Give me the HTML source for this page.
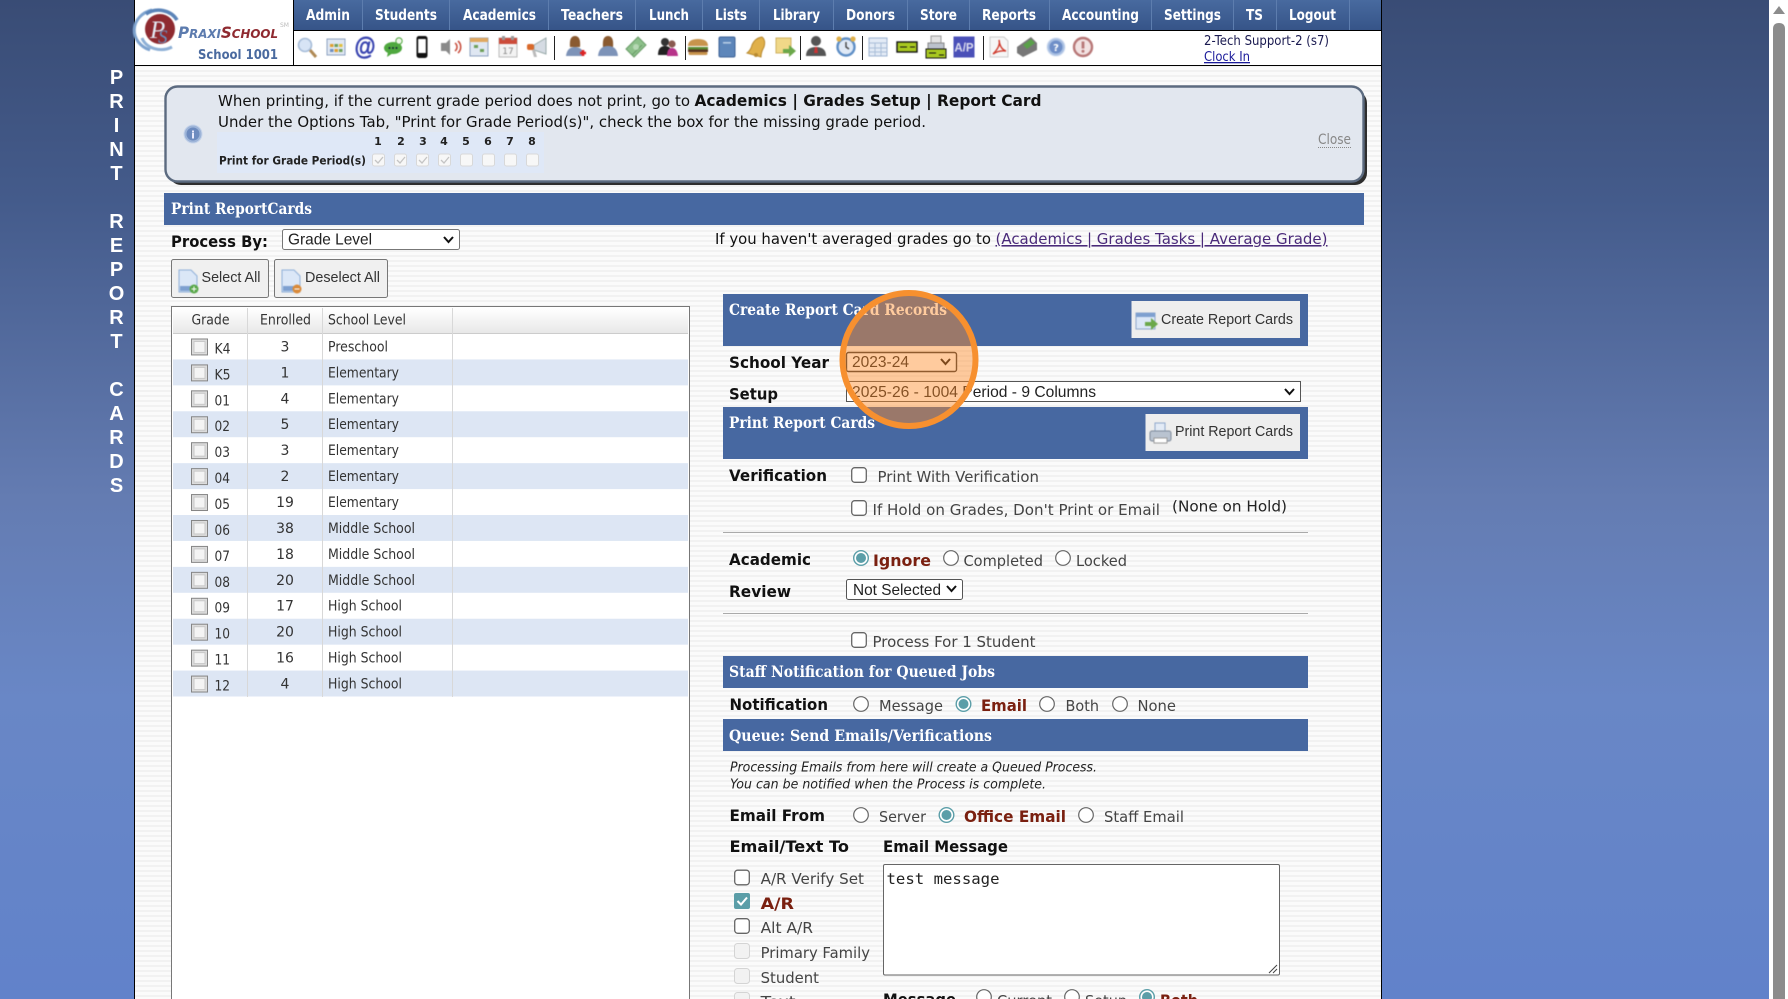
<!DOCTYPE html>
<html lang="en"><head><meta charset="utf-8"><title>Print ReportCards</title>
<style>
html,body{margin:0;padding:0;width:1788px;height:999px;overflow:hidden;background:#fff}
svg{display:block}
text{font-family:"DejaVu Sans","Liberation Sans",sans-serif;font-size:15.5px;fill:#444;white-space:pre}
.b{font-weight:bold;fill:#111;font-size:16px}
.r{font-weight:bold;fill:#7a2010;font-size:16px}
.h{font-weight:bold;fill:#fff;font-size:16px;font-family:"DejaVu Serif","DejaVu Sans",serif}
.n{font-weight:bold;fill:#fff;font-size:15px}
.a{font-family:"Liberation Sans",sans-serif;font-size:14.5px;fill:#333}
.s{font-family:"Liberation Sans",sans-serif;font-size:16px;fill:#222}
.t{font-size:14px;fill:#333}
.k{fill:#111;font-size:15.5px}
.kb{fill:#111;font-size:16px;font-weight:bold}
.i{font-style:italic;font-size:13.5px;fill:#222}
.v{font-family:"Liberation Sans",sans-serif;font-weight:bold;font-size:20px;fill:#fff}
.ic{filter:blur(.45px)}
</style></head><body>
<svg xmlns="http://www.w3.org/2000/svg" width="1788" height="999" viewBox="0 0 1788 999">
<defs>
<linearGradient id="bg" x1="0" y1="0" x2="0" y2="1"><stop offset="0" stop-color="#394c75"/><stop offset=".2" stop-color="#445b8b"/><stop offset=".5" stop-color="#647cb2"/><stop offset=".7" stop-color="#6987c6"/><stop offset="1" stop-color="#6182ca"/></linearGradient>
<linearGradient id="nav" x1="0" y1="0" x2="0" y2="1"><stop offset="0" stop-color="#486a9f"/><stop offset="1" stop-color="#365488"/></linearGradient>
<linearGradient id="th" x1="0" y1="0" x2="0" y2="1"><stop offset="0" stop-color="#fff"/><stop offset="1" stop-color="#e8e8e8"/></linearGradient>
<pattern id="st" width="4" height="5" patternUnits="userSpaceOnUse"><rect width="4" height="5" fill="#fbfbfb"/><rect width="4" height="2" fill="#f2f2f2"/></pattern>
<g id="cb"><rect x=".5" y=".5" width="16" height="16" fill="#dcdcdc" stroke="#858585"/><rect x="3" y="3" width="11" height="11" fill="#f4f4f4" stroke="#c8c8c8"/></g>
<g id="rc"><rect x=".7" y=".7" width="14.6" height="14.6" rx="3" fill="#fff" stroke="#666" stroke-width="1.3"/></g>
<g id="ro"><circle r="7.3" fill="#fff" stroke="#666" stroke-width="1.2"/></g>
<g id="rx"><circle r="7.3" fill="#fff" stroke="#5b9ea8" stroke-width="1.4"/><circle r="5" fill="#5b9ea8"/></g>
<g id="fc"><rect x=".5" y=".5" width="12" height="12" rx="2" fill="#f7f7f7" stroke="#d8d8d8"/></g>
</defs>

<rect width="1769" height="999" fill="url(#bg)"/>
<rect x="1769" width="19" height="999" fill="#fff"/>
<path d="M1779 6l6 8h-12z" fill="#8c8c8c"/>
<path d="M1773 999V29q0-6 6-6t6 6v970z" fill="#8c8c8c"/>

<!-- left vertical text -->
<g text-anchor="middle">
<text class="v" x="116.500" y="84">P</text><text class="v" x="116.500" y="108">R</text><text class="v" x="116.500" y="132">I</text><text class="v" x="116.500" y="156">N</text><text class="v" x="116.500" y="180">T</text>
<text class="v" x="116.500" y="228">R</text><text class="v" x="116.500" y="252">E</text><text class="v" x="116.500" y="276">P</text><text class="v" x="116.500" y="300">O</text><text class="v" x="116.500" y="324">R</text><text class="v" x="116.500" y="348">T</text>
<text class="v" x="116.500" y="396">C</text><text class="v" x="116.500" y="420">A</text><text class="v" x="116.500" y="444">R</text><text class="v" x="116.500" y="468">D</text><text class="v" x="116.500" y="492">S</text>
</g>

<!-- main column -->
<rect x="134" width="1248" height="999" fill="#000"/>
<rect x="135" y="66" width="1246" height="933" fill="url(#st)"/>
<rect x="135" width="158" height="65" fill="#fff"/>
<rect x="294" y="31" width="1087" height="34" fill="#fff"/>
<rect x="294" width="1087" height="30" fill="url(#nav)"/>
<rect x="293" width="1" height="65" fill="#000"/>

<!-- logo -->
<g class="ic">
<path d="M152 10A24 21 0 0 0 150 50" fill="none" stroke="#7ea3cf" stroke-width="3"/>
<path d="M146 14A21 19 0 0 1 177 20" fill="none" stroke="#5b84b8" stroke-width="3.500"/>
<path d="M142 38A20 16 0 0 0 172 47" fill="none" stroke="#8eb0d6" stroke-width="3"/>
<circle cx="160" cy="29" r="15" fill="#8f2a30"/>
<text x="150" y="38" style="font-family:'Liberation Serif',serif;font-style:italic;font-size:25px;fill:#e3e9f3">P</text>
<text x="158" y="43" style="font-family:'Liberation Serif',serif;font-style:italic;font-size:19px;fill:#6a90c0">S</text>
</g>
<text x="178" y="38" textLength="100" lengthAdjust="spacingAndGlyphs" style="font-weight:bold;font-style:italic;font-size:12.5px;fill:#5c7bae"><tspan style="font-size:16px">P</tspan>RAXI<tspan style="font-size:16px;fill:#8f2a30">S</tspan><tspan style="fill:#8f2a30">CHOOL</tspan></text>
<text x="280" y="27" style="font-size:6px;fill:#bbb">SM</text>
<text x="198" y="59" textLength="80" lengthAdjust="spacingAndGlyphs" style="font-family:'DejaVu Sans',sans-serif;font-weight:bold;font-size:13.5px;fill:#4a6a9f">School 1001</text>

<!-- nav -->
<g fill="#5d7dae">
<rect x="362" width="1" height="30"/><rect x="449" width="1" height="30"/><rect x="548" width="1" height="30"/><rect x="635" width="1" height="30"/><rect x="702" width="1" height="30"/><rect x="759" width="1" height="30"/><rect x="833" width="1" height="30"/><rect x="907" width="1" height="30"/><rect x="969" width="1" height="30"/><rect x="1049" width="1" height="30"/><rect x="1151" width="1" height="30"/><rect x="1233" width="1" height="30"/><rect x="1276" width="1" height="30"/><rect x="1349" width="1" height="30"/>
</g>
<text class="n" x="306" y="20" textLength="44" lengthAdjust="spacingAndGlyphs">Admin</text>
<text class="n" x="375" y="20" textLength="62" lengthAdjust="spacingAndGlyphs">Students</text>
<text class="n" x="463" y="20" textLength="73" lengthAdjust="spacingAndGlyphs">Academics</text>
<text class="n" x="561" y="20" textLength="62" lengthAdjust="spacingAndGlyphs">Teachers</text>
<text class="n" x="649" y="20" textLength="40" lengthAdjust="spacingAndGlyphs">Lunch</text>
<text class="n" x="715" y="20" textLength="32" lengthAdjust="spacingAndGlyphs">Lists</text>
<text class="n" x="773" y="20" textLength="47" lengthAdjust="spacingAndGlyphs">Library</text>
<text class="n" x="846" y="20" textLength="49" lengthAdjust="spacingAndGlyphs">Donors</text>
<text class="n" x="920" y="20" textLength="37" lengthAdjust="spacingAndGlyphs">Store</text>
<text class="n" x="982" y="20" textLength="54" lengthAdjust="spacingAndGlyphs">Reports</text>
<text class="n" x="1062" y="20" textLength="77" lengthAdjust="spacingAndGlyphs">Accounting</text>
<text class="n" x="1164" y="20" textLength="57" lengthAdjust="spacingAndGlyphs">Settings</text>
<text class="n" x="1246" y="20" textLength="17" lengthAdjust="spacingAndGlyphs">TS</text>
<text class="n" x="1289" y="20" textLength="47" lengthAdjust="spacingAndGlyphs">Logout</text>

<!-- toolbar icons -->
<g fill="#222"><rect x="554" y="36" width="1" height="24"/><rect x="685" y="36" width="1" height="24"/><rect x="800" y="36" width="1" height="24"/><rect x="862" y="36" width="1" height="24"/><rect x="983" y="36" width="1" height="24"/></g>
<g class="ic" transform="translate(0,-1)">
<g transform="translate(307,48)"><path d="M3 3l6 7" stroke="#b08a55" stroke-width="3"/><circle cx="-2" cy="-2" r="6.500" fill="#d7e4f5" stroke="#a6bcd8" stroke-width="1.600"/></g>
<g transform="translate(336,48)"><rect x="-9" y="-8" width="18" height="16" fill="#dfe7f2" stroke="#8ea3c2"/><rect x="-6" y="-3" width="3.500" height="3" fill="#e0a030"/><rect x="-1.500" y="-3" width="3.500" height="3" fill="#6fa05a"/><rect x="3" y="-3" width="3.500" height="3" fill="#e0c040"/><rect x="-6" y="2" width="3.500" height="3" fill="#6f8fbf"/><rect x="-1.500" y="2" width="3.500" height="3" fill="#e0a030"/><rect x="3" y="2" width="3.500" height="3" fill="#6fa05a"/></g>
<text x="365" y="56" text-anchor="middle" style="font-size:25px;font-weight:bold;fill:#3a45b0;stroke:#3a45b0;stroke-width:.5px;font-family:'Liberation Sans',sans-serif" textLength="21" lengthAdjust="spacingAndGlyphs">@</text>
<g transform="translate(393,49)"><ellipse rx="9" ry="6" fill="#4fa83f"/><path d="M-5 4l-1 5 6-4z" fill="#4fa83f"/><circle cx="-3.500" r="1" fill="#123"/><circle r="1" fill="#123"/><circle cx="3.500" r="1" fill="#123"/><circle cx="6" cy="-7" r="3.200" fill="#eef5e8" stroke="#4fa83f"/></g>
<g transform="translate(422,48)"><rect x="-5.500" y="-11" width="11" height="22" rx="2.500" fill="#111"/><rect x="-3.800" y="-8" width="7.600" height="14" fill="#fff"/></g>
<g transform="translate(452,48)"><path d="M-11-4h5l4-4v16l-4-4h-5z" fill="#8a8a8a"/><path d="M3-4a5 5 0 0 1 0 8M6-6a8 8 0 0 1 0 12" fill="none" stroke="#c85040" stroke-width="1.600"/></g>
<g transform="translate(479,48)"><rect x="-9" y="-9" width="18" height="18" fill="#dfe7f2" stroke="#8ea3c2"/><rect x="-9" y="-9" width="18" height="4" fill="#e0a860"/><rect x="-5" y="-2" width="4" height="3" fill="#6fa05a"/><rect x="1" y="2" width="4" height="3" fill="#6fa05a"/></g>
<g transform="translate(508,48)"><rect x="-9" y="-9" width="18" height="19" fill="#f3f3f3" stroke="#bbb"/><rect x="-9" y="-9" width="18" height="6" fill="#cc4b3a"/><rect x="-6" y="-11" width="3" height="4" fill="#999"/><rect x="3" y="-11" width="3" height="4" fill="#999"/><text x="0" y="7" text-anchor="middle" style="font-size:9px;fill:#888">17</text></g>
<g transform="translate(537,48)"><path d="M-3-2L9-9v16L-3 3z" fill="#d5dbe3" stroke="#9aa"/><rect x="-10" y="-3" width="7" height="6" rx="2" fill="#d96a2c"/><path d="M-5 3l2 7h3l-2-7z" fill="#bbb"/></g>
<g transform="translate(575,48)"><path d="M-5 0q-1-11 5-11t5 11z" fill="#8a5a30"/><path d="M-9 9q1-9 9-9t9 9z" fill="#7d93b8"/><path d="M5 6h6M8 3v6" stroke="#d22" stroke-width="2.600"/></g>
<g transform="translate(608,48)"><path d="M-5 0q-1-11 5-11t5 11z" fill="#8a5a30"/><path d="M-10 9q1-10 10-10t10 10z" fill="#7d93b8"/></g>
<g transform="translate(636,48)"><path d="M-10 2L2-10 10-2-2 10z" fill="#8dc08a" stroke="#6a9c68"/><path d="M-7 5L3-5" stroke="#6a9c68" transform="translate(3,3)"/><circle cy="0" r="3" fill="#b6d8b4"/></g>
<g transform="translate(668,48)"><circle cx="-3" cy="-5" r="4" fill="#333"/><path d="M-10 8q0-9 7-9t7 9z" fill="#222"/><circle cx="4" cy="-3" r="3.600" fill="#8a5a50"/><path d="M-1 9q0-8 5-8t6 8z" fill="#b8338a"/></g>
<g transform="translate(698,48)"><path d="M-10-1q0-7 10-7t10 7z" fill="#c8944c"/><rect x="-10" y="0" width="20" height="2.500" fill="#5a8a30"/><rect x="-10" y="2.500" width="20" height="2.500" fill="#5a3420"/><rect x="-9.500" y="5" width="19" height="3" rx="1.500" fill="#c8944c"/></g>
<g transform="translate(727,48)"><rect x="-8" y="-10" width="16" height="20" rx="1.500" fill="#5d86ba" stroke="#3d6296"/><rect x="-4" y="-5" width="8" height="1.600" fill="#b9cde6"/></g>
<g transform="translate(757,48)"><path d="M-10 6Q-6 3-5-2-2-9 5-10 9-7 7 0 4 5 4 10z" fill="#e0b04a" stroke="#b88a30"/><circle cx="-1" cy="8" r="2" fill="#b88a30"/></g>
<g transform="translate(785,48)"><rect x="-9" y="-9" width="15" height="15" fill="#f0d888" stroke="#cfb060"/><path d="M-2 2h6v-4l7 6-7 6V6h-6z" fill="#6ba84a"/></g>
<g transform="translate(816,48)"><circle cy="-6" r="5" fill="#555"/><path d="M-10 9q0-9 10-9t10 9z" fill="#555"/><path d="M-1 0h2l1 6H-2z" fill="#c33"/></g>
<g transform="translate(846,48)"><circle r="8.500" fill="#dfe9f6" stroke="#5f8fc6" stroke-width="2.400"/><path d="M0-5v5l3 2" stroke="#444" fill="none" stroke-width="1.400"/><circle cx="-7" cy="-8" r="2.600" fill="#e0b04a"/><circle cx="7" cy="-8" r="2.600" fill="#e0b04a"/></g>
<g transform="translate(878,48)"><rect x="-9" y="-9" width="18" height="18" fill="#e3ebf6" stroke="#9db3d2"/><path d="M-9-4h18M-9 1h18M-9 5h18M-3-4v13M3-4v13" stroke="#a9bdd8"/></g>
<g transform="translate(907,48)"><rect x="-10" y="-5" width="20" height="10" fill="#a8c820" stroke="#111" stroke-width="1.400"/><path d="M-7 0h7M3 0h5" stroke="#111"/></g>
<g transform="translate(936,48)"><rect x="-5" y="-11" width="10" height="8" fill="#e3e3e3" stroke="#999"/><rect x="-8" y="-4" width="16" height="6" fill="#bcc2cc" stroke="#888"/><rect x="-10" y="2" width="20" height="9" fill="#a8c820" stroke="#111"/><path d="M-7 6h7M3 8h5" stroke="#111"/></g>
<g transform="translate(964,48)"><rect x="-10.500" y="-10.500" width="21" height="21" fill="#4a50b8"/><text x="0" y="4.500" text-anchor="middle" style="font-family:'Liberation Sans',sans-serif;font-size:11.500px;font-weight:bold;fill:#dde">A/P</text></g>
<g transform="translate(999,48)"><path d="M-9-10H5l4 4v16H-9z" fill="#f6f6f6" stroke="#ccc"/><path d="M-6 7Q2-1 0-7 1 2 7 4 0 3-6 7z" fill="none" stroke="#d03a2c" stroke-width="1.400"/></g>
<g transform="translate(1027,48)"><path d="M-10 0L4-10 10-4V3L-4 10-10 6z" fill="#777"/><path d="M-4-2L4-8 8-4 0 2z" fill="#5aa04a"/></g>
<g transform="translate(1056,48)"><circle r="9" fill="#a8bfe2" stroke="#d5e0f2"/><circle r="6.500" fill="#6f8fc8"/><text x="0" y="4" text-anchor="middle" style="font-size:10px;font-weight:bold;fill:#fff">?</text></g>
<g transform="translate(1083,48)"><circle r="9" fill="#f2e2e2" stroke="#b87878" stroke-width="2.400"/><rect x="-1.400" y="-5.500" width="2.800" height="7" fill="#b87878"/><circle cy="4.200" r="1.500" fill="#b87878"/></g>
</g>

<text x="1204" y="45" textLength="125" lengthAdjust="spacingAndGlyphs" style="font-size:13px;fill:#1a1a50">2-Tech Support-2 (s7)</text>
<text x="1204" y="61" textLength="46" lengthAdjust="spacingAndGlyphs" style="font-size:13px;fill:#1a1a9a;text-decoration:underline">Clock In</text>

<!-- alert -->
<rect x="169" y="91" width="1198" height="94" rx="12" fill="#2e2e2e"/>
<rect x="165.500" y="86.500" width="1198" height="95" rx="12" fill="#e2e7ef" stroke="#5c6b80" stroke-width="2.400"/>
<text class="k" x="218" y="106" textLength="472" lengthAdjust="spacingAndGlyphs">When printing, if the current grade period does not print, go to</text>
<text class="kb" x="694.500" y="106" textLength="347" lengthAdjust="spacingAndGlyphs">Academics | Grades Setup | Report Card</text>
<text class="k" x="218" y="127" textLength="708" lengthAdjust="spacingAndGlyphs">Under the Options Tab, "Print for Grade Period(s)", check the box for the missing grade period.</text>
<circle cx="193" cy="134" r="9" fill="#9db4d8" stroke="#c6d4ea"/>
<circle cx="193" cy="134" r="6.500" fill="#6d8bbf"/>
<text x="193" y="138.500" text-anchor="middle" style="font-size:11px;font-weight:bold;fill:#eef">i</text>
<rect x="217" y="132" width="327" height="41" fill="#dfe8f7"/>
<g text-anchor="middle">
<text x="378" y="145" style="font-size:11px;font-weight:bold;fill:#222">1</text><text x="401" y="145" style="font-size:11px;font-weight:bold;fill:#222">2</text><text x="423" y="145" style="font-size:11px;font-weight:bold;fill:#222">3</text><text x="444" y="145" style="font-size:11px;font-weight:bold;fill:#222">4</text><text x="466" y="145" style="font-size:11px;font-weight:bold;fill:#222">5</text><text x="488" y="145" style="font-size:11px;font-weight:bold;fill:#222">6</text><text x="510" y="145" style="font-size:11px;font-weight:bold;fill:#222">7</text><text x="532" y="145" style="font-size:11px;font-weight:bold;fill:#222">8</text>
</g>
<text x="219" y="164.500" textLength="147" lengthAdjust="spacingAndGlyphs" style="font-size:11.500px;font-weight:bold;fill:#222">Print for Grade Period(s)</text>
<use href="#fc" x="372" y="153.500"/><use href="#fc" x="394" y="153.500"/><use href="#fc" x="416" y="153.500"/><use href="#fc" x="438" y="153.500"/><use href="#fc" x="460" y="153.500"/><use href="#fc" x="482" y="153.500"/><use href="#fc" x="504" y="153.500"/><use href="#fc" x="526" y="153.500"/>
<path d="M375 160l3 3 5-6M397 160l3 3 5-6M419 160l3 3 5-6M441 160l3 3 5-6" fill="none" stroke="#c4c4c4" stroke-width="1.300"/>
<text x="1318" y="144" textLength="33" lengthAdjust="spacingAndGlyphs" style="font-size:14px;fill:#888">Close</text>
<path d="M1318 147.500h33" stroke="#888" stroke-dasharray="1 1"/>

<!-- header -->
<rect x="164" y="193" width="1200" height="32" fill="#4768a1"/>
<text class="h" x="171" y="214" textLength="141" lengthAdjust="spacingAndGlyphs">Print ReportCards</text>
<text class="b" x="171" y="247" textLength="97" lengthAdjust="spacingAndGlyphs">Process By:</text>
<rect x="282.500" y="229.500" width="177" height="20" rx="2" fill="#fff" stroke="#777"/>
<text class="s" x="288" y="244.500" textLength="84" lengthAdjust="spacingAndGlyphs">Grade Level</text>
<path d="M444 237l4.500 5 4.500-5" fill="none" stroke="#111" stroke-width="2"/>
<text class="k" x="715" y="244" textLength="276" lengthAdjust="spacingAndGlyphs">If you haven't averaged grades go to</text>
<text x="995.500" y="244" textLength="332" lengthAdjust="spacingAndGlyphs" style="font-size:15.500px;fill:#4a2a7a;text-decoration:underline">(Academics | Grades Tasks | Average Grade)</text>

<!-- buttons -->
<rect x="171.500" y="259.500" width="97" height="38" rx="2" fill="#f0f0f0" stroke="#777"/>
<rect x="274.500" y="259.500" width="113" height="38" rx="2" fill="#f0f0f0" stroke="#777"/>
<g class="ic"><path d="M179 270h12l6 6v16h-18z" fill="#dbe7f7" stroke="#8fb0d8"/><rect x="180" y="286" width="14" height="5" fill="#7ea0d0"/><circle cx="194" cy="289" r="4.500" fill="#5aa84a"/><path d="M191.500 289h5M194 286.500v5" stroke="#fff"/>
<path d="M282 270h12l6 6v16h-18z" fill="#dbe7f7" stroke="#8fb0d8"/><rect x="283" y="286" width="14" height="5" fill="#7ea0d0"/><circle cx="297" cy="289" r="4.500" fill="#d98a3a"/><path d="M294.500 289h5" stroke="#fff"/></g>
<text class="a" x="201.500" y="282" textLength="59" lengthAdjust="spacingAndGlyphs">Select All</text>
<text class="a" x="305" y="282" textLength="75" lengthAdjust="spacingAndGlyphs">Deselect All</text>

<!-- grade table -->
<rect x="171.500" y="306.500" width="518" height="701" fill="#fff" stroke="#777"/>
<rect x="173" y="308" width="515" height="25" fill="url(#th)"/>
<rect x="173" y="333" width="515" height="1" fill="#ccc"/>
<text class="t" x="191.500" y="324.500" textLength="38" lengthAdjust="spacingAndGlyphs">Grade</text>
<text class="t" x="260" y="324.500" textLength="51" lengthAdjust="spacingAndGlyphs">Enrolled</text>
<text class="t" x="328" y="324.500" textLength="78" lengthAdjust="spacingAndGlyphs">School Level</text>
<g fill="#d8d8d8"><rect x="247" y="308" width="1" height="389"/><rect x="322" y="308" width="1" height="389"/><rect x="452" y="308" width="1" height="389"/></g>
<g transform="translate(0,.4) scale(1,.9973)">
<g fill="#dde6f4"><rect x="173" y="360" width="515" height="26"/><rect x="173" y="412" width="515" height="26"/><rect x="173" y="464" width="515" height="26"/><rect x="173" y="516" width="515" height="26"/><rect x="173" y="568" width="515" height="26"/><rect x="173" y="620" width="515" height="26"/><rect x="173" y="672" width="515" height="26"/></g>
<g fill="#d8d8d8"><rect x="247" y="334" width="1" height="364"/><rect x="322" y="334" width="1" height="364"/><rect x="452" y="334" width="1" height="364"/></g>
<use href="#cb" x="191" y="339"/><text class="t" x="214.500" y="354" textLength="16" lengthAdjust="spacingAndGlyphs">K4</text><text class="t" x="285" y="352" text-anchor="middle">3</text><text class="t" x="328" y="352" textLength="60" lengthAdjust="spacingAndGlyphs">Preschool</text>
<use href="#cb" x="191" y="365"/><text class="t" x="214.500" y="380" textLength="16" lengthAdjust="spacingAndGlyphs">K5</text><text class="t" x="285" y="378" text-anchor="middle">1</text><text class="t" x="328" y="378" textLength="71" lengthAdjust="spacingAndGlyphs">Elementary</text>
<use href="#cb" x="191" y="391"/><text class="t" x="214.500" y="406" textLength="15.500" lengthAdjust="spacingAndGlyphs">01</text><text class="t" x="285" y="404" text-anchor="middle">4</text><text class="t" x="328" y="404" textLength="71" lengthAdjust="spacingAndGlyphs">Elementary</text>
<use href="#cb" x="191" y="417"/><text class="t" x="214.500" y="432" textLength="15.500" lengthAdjust="spacingAndGlyphs">02</text><text class="t" x="285" y="430" text-anchor="middle">5</text><text class="t" x="328" y="430" textLength="71" lengthAdjust="spacingAndGlyphs">Elementary</text>
<use href="#cb" x="191" y="443"/><text class="t" x="214.500" y="458" textLength="15.500" lengthAdjust="spacingAndGlyphs">03</text><text class="t" x="285" y="456" text-anchor="middle">3</text><text class="t" x="328" y="456" textLength="71" lengthAdjust="spacingAndGlyphs">Elementary</text>
<use href="#cb" x="191" y="469"/><text class="t" x="214.500" y="484" textLength="15.500" lengthAdjust="spacingAndGlyphs">04</text><text class="t" x="285" y="482" text-anchor="middle">2</text><text class="t" x="328" y="482" textLength="71" lengthAdjust="spacingAndGlyphs">Elementary</text>
<use href="#cb" x="191" y="495"/><text class="t" x="214.500" y="510" textLength="15.500" lengthAdjust="spacingAndGlyphs">05</text><text class="t" x="285" y="508" text-anchor="middle">19</text><text class="t" x="328" y="508" textLength="71" lengthAdjust="spacingAndGlyphs">Elementary</text>
<use href="#cb" x="191" y="521"/><text class="t" x="214.500" y="536" textLength="15.500" lengthAdjust="spacingAndGlyphs">06</text><text class="t" x="285" y="534" text-anchor="middle">38</text><text class="t" x="328" y="534" textLength="87" lengthAdjust="spacingAndGlyphs">Middle School</text>
<use href="#cb" x="191" y="547"/><text class="t" x="214.500" y="562" textLength="15.500" lengthAdjust="spacingAndGlyphs">07</text><text class="t" x="285" y="560" text-anchor="middle">18</text><text class="t" x="328" y="560" textLength="87" lengthAdjust="spacingAndGlyphs">Middle School</text>
<use href="#cb" x="191" y="573"/><text class="t" x="214.500" y="588" textLength="15.500" lengthAdjust="spacingAndGlyphs">08</text><text class="t" x="285" y="586" text-anchor="middle">20</text><text class="t" x="328" y="586" textLength="87" lengthAdjust="spacingAndGlyphs">Middle School</text>
<use href="#cb" x="191" y="599"/><text class="t" x="214.500" y="614" textLength="15.500" lengthAdjust="spacingAndGlyphs">09</text><text class="t" x="285" y="612" text-anchor="middle">17</text><text class="t" x="328" y="612" textLength="74" lengthAdjust="spacingAndGlyphs">High School</text>
<use href="#cb" x="191" y="625"/><text class="t" x="214.500" y="640" textLength="15.500" lengthAdjust="spacingAndGlyphs">10</text><text class="t" x="285" y="638" text-anchor="middle">20</text><text class="t" x="328" y="638" textLength="74" lengthAdjust="spacingAndGlyphs">High School</text>
<use href="#cb" x="191" y="651"/><text class="t" x="214.500" y="666" textLength="15.500" lengthAdjust="spacingAndGlyphs">11</text><text class="t" x="285" y="664" text-anchor="middle">16</text><text class="t" x="328" y="664" textLength="74" lengthAdjust="spacingAndGlyphs">High School</text>
<use href="#cb" x="191" y="677"/><text class="t" x="214.500" y="692" textLength="15.500" lengthAdjust="spacingAndGlyphs">12</text><text class="t" x="285" y="690" text-anchor="middle">4</text><text class="t" x="328" y="690" textLength="74" lengthAdjust="spacingAndGlyphs">High School</text>
</g>

<!-- right panel -->
<rect x="723" y="294" width="585" height="52" fill="#4768a1"/>
<text class="h" x="729" y="315" textLength="218" lengthAdjust="spacingAndGlyphs">Create Report Card Records</text>
<rect x="1131.500" y="301" width="168.500" height="37" fill="#eee"/>
<g class="ic"><rect x="1136" y="313" width="19" height="16" fill="#dbe7f7" stroke="#8fa8cc"/><rect x="1136" y="313" width="19" height="4" fill="#7ea0d0"/><path d="M1145 322h6v-4l7 6-7 6v-4h-6z" fill="#6ba84a"/></g>
<text class="a" x="1161" y="324" textLength="132" lengthAdjust="spacingAndGlyphs">Create Report Cards</text>

<text class="b" x="729" y="368" textLength="100" lengthAdjust="spacingAndGlyphs">School Year</text>
<text class="b" x="729" y="399.500" textLength="49" lengthAdjust="spacingAndGlyphs">Setup</text>
<rect x="846.500" y="352.500" width="110" height="19" rx="2" fill="#fff" stroke="#333" stroke-width="1.400"/>
<text class="s" x="852" y="367" textLength="57" lengthAdjust="spacingAndGlyphs">2023-24</text>
<path d="M941 359l4.500 5 4.500-5" fill="none" stroke="#111" stroke-width="2"/>
<rect x="846.500" y="381.500" width="454" height="20" fill="#fff" stroke="#555"/>
<text class="s" x="852" y="397" textLength="244" lengthAdjust="spacingAndGlyphs">2025-26 - 1004 Period - 9 Columns</text>
<path d="M1285 389l4.500 5 4.500-5" fill="none" stroke="#111" stroke-width="2"/>

<rect x="723" y="407" width="585" height="52" fill="#4768a1"/>
<text class="h" x="729" y="428" textLength="146" lengthAdjust="spacingAndGlyphs">Print Report Cards</text>
<rect x="1145.500" y="414" width="154.500" height="37" fill="#eee"/>
<g class="ic"><rect x="1155" y="423" width="10" height="9" fill="#e3ebf6" stroke="#8fa8cc"/><rect x="1150" y="431" width="21" height="10" rx="2" fill="#b9c3d0" stroke="#7e8a9a"/><rect x="1154" y="438" width="13" height="5" fill="#fff" stroke="#999"/></g>
<text class="a" x="1175" y="436" textLength="118" lengthAdjust="spacingAndGlyphs">Print Report Cards</text>

<text class="b" x="729" y="481" textLength="98" lengthAdjust="spacingAndGlyphs">Verification</text>
<use href="#rc" x="851" y="467"/>
<text x="877.500" y="482" textLength="161.500" lengthAdjust="spacingAndGlyphs">Print With Verification</text>
<use href="#rc" x="851" y="500"/>
<text x="872.500" y="515" textLength="287.500" lengthAdjust="spacingAndGlyphs">If Hold on Grades, Don't Print or Email</text>
<text x="1172" y="511.500" textLength="115" lengthAdjust="spacingAndGlyphs" style="fill:#222">(None on Hold)</text>
<rect x="723" y="532" width="585" height="1" fill="#aaa"/>

<text class="b" x="729" y="565" textLength="82" lengthAdjust="spacingAndGlyphs">Academic</text>
<use href="#rx" x="861" y="558"/>
<text class="r" x="873" y="566" textLength="58" lengthAdjust="spacingAndGlyphs">Ignore</text>
<use href="#ro" x="951" y="558"/>
<text x="963.500" y="566" textLength="79.500" lengthAdjust="spacingAndGlyphs">Completed</text>
<use href="#ro" x="1063" y="558"/>
<text x="1076" y="566" textLength="51" lengthAdjust="spacingAndGlyphs">Locked</text>
<text class="b" x="729" y="597" textLength="62" lengthAdjust="spacingAndGlyphs">Review</text>
<rect x="846.500" y="579.500" width="116" height="20" rx="2" fill="#fff" stroke="#555"/>
<text class="s" x="853" y="595" textLength="88" lengthAdjust="spacingAndGlyphs">Not Selected</text>
<path d="M947 586l4.500 5 4.500-5" fill="none" stroke="#111" stroke-width="2"/>
<rect x="723" y="613" width="585" height="1" fill="#aaa"/>

<use href="#rc" x="851" y="632"/>
<text x="872.500" y="647" textLength="163" lengthAdjust="spacingAndGlyphs">Process For 1 Student</text>

<rect x="723" y="656" width="585" height="32" fill="#4768a1"/>
<text class="h" x="729" y="677" textLength="266" lengthAdjust="spacingAndGlyphs">Staff Notification for Queued Jobs</text>
<text class="b" x="729.500" y="710" textLength="98.500" lengthAdjust="spacingAndGlyphs">Notification</text>
<use href="#ro" x="861" y="704"/>
<text x="879" y="711" textLength="64" lengthAdjust="spacingAndGlyphs">Message</text>
<use href="#rx" x="963.500" y="704"/>
<text class="r" x="981" y="711" textLength="46" lengthAdjust="spacingAndGlyphs">Email</text>
<use href="#ro" x="1047" y="704"/>
<text x="1065.500" y="711" textLength="33.500" lengthAdjust="spacingAndGlyphs">Both</text>
<use href="#ro" x="1120" y="704"/>
<text x="1137.500" y="711" textLength="38.500" lengthAdjust="spacingAndGlyphs">None</text>

<rect x="723" y="719" width="585" height="32" fill="#4768a1"/>
<text class="h" x="729" y="741" textLength="263" lengthAdjust="spacingAndGlyphs">Queue: Send Emails/Verifications</text>
<text class="i" x="730" y="771.500" textLength="367" lengthAdjust="spacingAndGlyphs">Processing Emails from here will create a Queued Process.</text>
<text class="i" x="730" y="788.500" textLength="316" lengthAdjust="spacingAndGlyphs">You can be notified when the Process is complete.</text>

<text class="b" x="729.500" y="821" textLength="95.500" lengthAdjust="spacingAndGlyphs">Email From</text>
<use href="#ro" x="861" y="815"/>
<text x="879" y="822" textLength="47" lengthAdjust="spacingAndGlyphs">Server</text>
<use href="#rx" x="946.500" y="815"/>
<text class="r" x="964" y="822" textLength="102" lengthAdjust="spacingAndGlyphs">Office Email</text>
<use href="#ro" x="1086" y="815"/>
<text x="1104" y="822" textLength="80" lengthAdjust="spacingAndGlyphs">Staff Email</text>

<text class="b" x="729.500" y="852" textLength="119.500" lengthAdjust="spacingAndGlyphs">Email/Text To</text>
<text class="b" x="883" y="852" textLength="125" lengthAdjust="spacingAndGlyphs">Email Message</text>

<g transform="translate(734,869.500)"><use href="#rc"/></g>
<text x="760.600" y="884" textLength="103.400" lengthAdjust="spacingAndGlyphs">A/R Verify Set</text>
<rect x="734" y="893" width="16" height="16" rx="2" fill="#5b9ea8"/><path d="M737.500 901l3.500 3.500 6-7" fill="none" stroke="#fff" stroke-width="2"/>
<text class="r" x="760.600" y="909" textLength="33.400" lengthAdjust="spacingAndGlyphs">A/R</text>
<g transform="translate(734,918)"><use href="#rc"/></g>
<text x="760.600" y="933" textLength="52.400" lengthAdjust="spacingAndGlyphs">Alt A/R</text>
<rect x="734.500" y="943.500" width="15" height="15" rx="3" fill="#f2f2f2" stroke="#d4d4d4"/>
<text x="760.600" y="958" textLength="109.400" lengthAdjust="spacingAndGlyphs">Primary Family</text>
<rect x="734.500" y="968.500" width="15" height="15" rx="3" fill="#f2f2f2" stroke="#d4d4d4"/>
<text x="760.600" y="983" textLength="58.400" lengthAdjust="spacingAndGlyphs">Student</text>
<rect x="734.500" y="992.500" width="15" height="15" rx="3" fill="#f2f2f2" stroke="#d4d4d4"/>
<text x="760.600" y="1007" textLength="35" lengthAdjust="spacingAndGlyphs">Text</text>

<rect x="883.500" y="864.500" width="396" height="110.500" rx="1.500" fill="#fff" stroke="#666"/>
<text x="886.500" y="884" textLength="113" lengthAdjust="spacingAndGlyphs" style="font-family:'DejaVu Sans Mono',monospace;font-size:15px;fill:#222">test message</text>
<path d="M1269 973l8-8M1273 973l4-4" stroke="#444"/>

<text class="b" x="883" y="1005" textLength="73" lengthAdjust="spacingAndGlyphs">Message</text>
<use href="#ro" x="984" y="997"/>
<text x="997" y="1006" textLength="55" lengthAdjust="spacingAndGlyphs">Current</text>
<use href="#ro" x="1072" y="997"/>
<text x="1085" y="1006" textLength="42" lengthAdjust="spacingAndGlyphs">Setup</text>
<use href="#rx" x="1147" y="997"/>
<text class="r" x="1160" y="1006" textLength="38" lengthAdjust="spacingAndGlyphs">Both</text>

<!-- orange highlight -->
<circle cx="909" cy="359.500" r="66.500" fill="#ff8c28" fill-opacity=".45" stroke="#f7902f" stroke-width="6"/>
</svg>
</body></html>
